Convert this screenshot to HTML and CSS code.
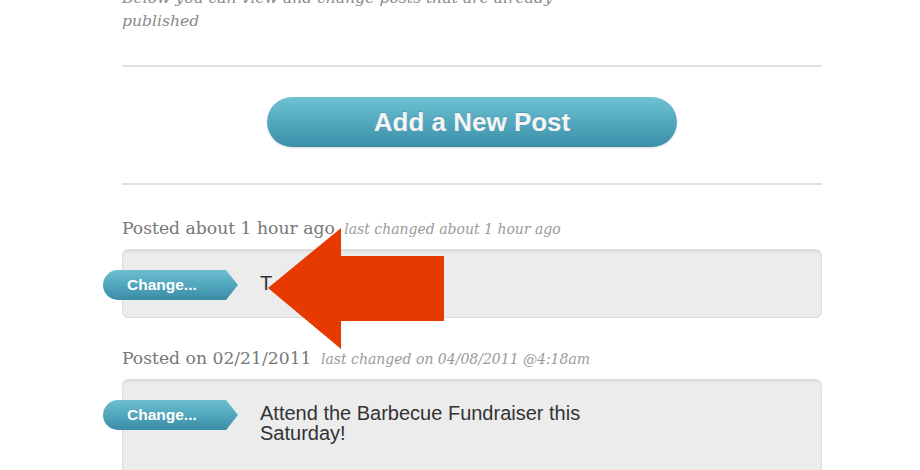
FILE: index.html
```html
<!DOCTYPE html>
<html lang="en">

<head>
    <meta charset="UTF-8">
    <meta name="viewport" content="width=device-width, initial-scale=1.0">
    <title>Your Posts</title>
    <link rel="stylesheet" href="styles.css">
</head>

<body>
    <div class="page">
        <p class="intro">Below you can view and change posts that are already published</p>

        <hr class="rule">

        <div class="add-row">
            <a class="add-btn" href="#">Add a New Post</a>
        </div>

        <hr class="rule rule-bottom">

        <div class="post post-first">
            <div class="post-meta">
                <span class="posted">Posted about 1 hour ago</span>
                <span class="changed">last changed about 1 hour ago</span>
            </div>
            <div class="post-box">
                <a class="change-btn" href="#">Change...</a>
                <div class="post-text">T</div>
            </div>
        </div>

        <div class="post">
            <div class="post-meta">
                <span class="posted">Posted on 02/21/2011</span>
                <span class="changed">last changed on 04/08/2011 @4:18am</span>
            </div>
            <div class="post-box post-box-tall">
                <a class="change-btn" href="#">Change...</a>
                <div class="post-text">Attend the Barbecue Fundraiser this Saturday!</div>
            </div>
        </div>
    </div>

    <!-- callout arrow pointing at the change button -->
    <svg class="arrow" width="180" height="124" viewBox="0 0 180 124">
        <polygon points="2,61 75,1 75,29 178,29 178,94 75,94 75,122" fill="#e63a00" />
    </svg>
</body>

</html>
```

FILE: styles.css
```css
body {
    margin: 0;
    background: #fff;
    font-family: "Liberation Sans", Arial, sans-serif;
    overflow: hidden;
}

.page {
    width: 700px;
    margin: -13px 0 0 122px;
}

.intro {
    width: 460px;
    margin: 0;
    font-family: "DejaVu Serif", Georgia, serif;
    font-style: italic;
    font-size: 15.6px;
    line-height: 23px;
    color: #8a8a8a;
}

.rule {
    border: none;
    height: 2px;
    background: #e0e0e0;
    margin: 32px 0 0;
}

.rule-bottom {
    margin-top: 36px;
}

.add-row {
    display: flex;
    justify-content: center;
    margin-top: 30px;
}

.add-btn {
    display: flex;
    align-items: center;
    justify-content: center;
    width: 410px;
    height: 50px;
    border-radius: 25px;
    background: linear-gradient(#6ec2d2, #53a8bf 50%, #3b8ea7);
    box-shadow: 0 1px 2px rgba(0, 0, 0, 0.15);
    color: #f4f4f4;
    font-weight: bold;
    font-size: 26px;
    text-decoration: none;
    text-shadow: 0 -1px 0 rgba(0, 0, 0, 0.12);
}

.post {
    margin-top: 28px;
}

.post-first {
    margin-top: 31px;
}

.post-meta {
    line-height: 24px;
    white-space: nowrap;
}

.posted {
    font-family: "DejaVu Serif", Georgia, serif;
    font-size: 17.2px;
    color: #777;
}

.changed {
    margin-left: 5px;
    font-family: "DejaVu Serif", Georgia, serif;
    font-style: italic;
    font-size: 14px;
    color: #9a9a9a;
}

.post-box {
    display: flex;
    align-items: flex-start;
    gap: 22px;
    margin-top: 8px;
    height: 69px;
    box-sizing: border-box;
    padding-top: 20px;
    background: #ececec;
    border: 1px solid #dedede;
    border-radius: 6px;
    box-shadow: inset 0 2px 2px rgba(0, 0, 0, 0.06);
}

.post-box-tall {
    height: 120px;
}

.change-btn {
    flex: none;
    display: flex;
    align-items: center;
    box-sizing: border-box;
    width: 135px;
    height: 30px;
    margin-left: -20px;
    padding-left: 24px;
    border-radius: 15px 0 0 15px;
    clip-path: polygon(0 0, 123px 0, 135px 50%, 123px 100%, 0 100%);
    background: linear-gradient(#6cc0d0, #4fa3bb 55%, #3a8ca5);
    color: #fff;
    font-weight: bold;
    font-size: 15.5px;
    text-decoration: none;
}

.post-text {
    width: 380px;
    padding-top: 3px;
    font-size: 20px;
    line-height: 20px;
    color: #333;
}

.arrow {
    position: absolute;
    left: 266px;
    top: 227px;
}
```
